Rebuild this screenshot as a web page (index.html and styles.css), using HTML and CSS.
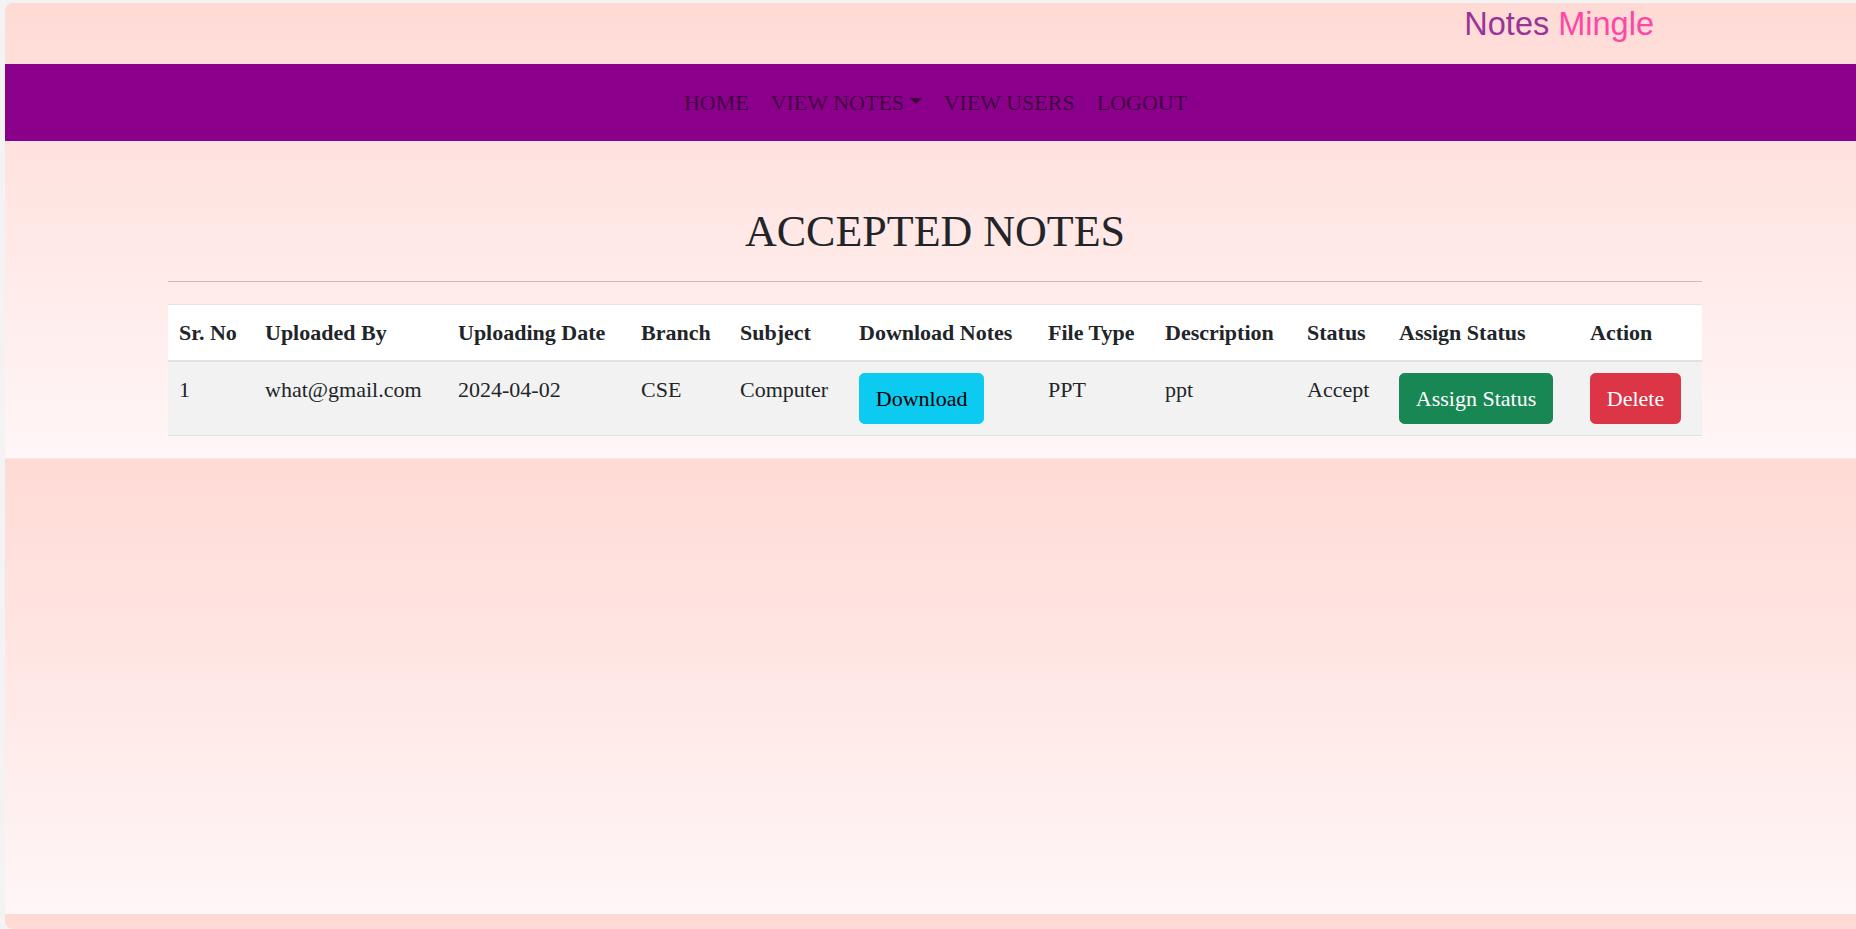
FILE: index.html
```html
<!DOCTYPE html>
<html lang="en">
<head>
<meta charset="utf-8">
<title>Accepted Notes - Notes Mingle</title>
<link rel="stylesheet" href="styles.css">
</head>
<body>
<div class="window">
  <header class="topbar">
    <div class="brand"><span class="brand-notes">Notes</span> <span class="brand-mingle">Mingle</span></div>
  </header>
  <nav class="navbar">
    <ul class="nav-list">
      <li><a class="nav-link" href="#">Home</a></li>
      <li><a class="nav-link dropdown-toggle" href="#">View Notes</a></li>
      <li><a class="nav-link" href="#">View Users</a></li>
      <li><a class="nav-link" href="#">Logout</a></li>
    </ul>
  </nav>
  <main class="content">
    <div class="container">
      <h2 class="page-title">ACCEPTED NOTES</h2>
      <hr class="divider">
      <table class="notes-table">
        <colgroup>
          <col class="c-sr"><col class="c-by"><col class="c-date"><col class="c-branch"><col class="c-subject"><col class="c-download"><col class="c-type"><col class="c-desc"><col class="c-status"><col class="c-assign"><col class="c-action">
        </colgroup>
        <thead>
          <tr>
            <th>Sr. No</th>
            <th>Uploaded By</th>
            <th>Uploading Date</th>
            <th>Branch</th>
            <th>Subject</th>
            <th>Download Notes</th>
            <th>File Type</th>
            <th>Description</th>
            <th>Status</th>
            <th>Assign Status</th>
            <th>Action</th>
          </tr>
        </thead>
        <tbody>
          <tr>
            <td>1</td>
            <td>what@gmail.com</td>
            <td>2024-04-02</td>
            <td>CSE</td>
            <td>Computer</td>
            <td><a class="btn btn-info" href="#">Download</a></td>
            <td>PPT</td>
            <td>ppt</td>
            <td>Accept</td>
            <td><a class="btn btn-success" href="#">Assign Status</a></td>
            <td><a class="btn btn-danger" href="#">Delete</a></td>
          </tr>
        </tbody>
      </table>
    </div>
  </main>
</div>
</body>
</html>
```

FILE: styles.css
```css
html, body {
  margin: 0;
  padding: 0;
}

body {
  background: #f3f3f3;
  font-family: "Liberation Serif", "Times New Roman", serif;
  color: #212529;
  overflow: hidden;
}

.window {
  margin: 3px 0 0 5px;
  height: 926px;
  border-radius: 8px 0 0 8px;
  overflow: hidden;
  background-image: linear-gradient(to bottom, #ffdad5, #fff6f7);
  background-size: 100% 455.5px;
  background-repeat: repeat-y;
}

/* top brand bar */
.topbar {
  height: 61px;
  display: flex;
  justify-content: flex-end;
  align-items: flex-start;
  padding-right: 202px;
  box-sizing: border-box;
}

.brand {
  font-family: "Liberation Sans", Arial, sans-serif;
  font-size: 32.5px;
  line-height: 38px;
  padding-top: 2px;
  white-space: nowrap;
}

.brand-notes { color: #993399; }
.brand-mingle { color: #ff45a6; }

/* navigation */
.navbar {
  background: #8b008b;
  padding: 11px 0 11px 10px;
}

.nav-list {
  list-style: none;
  margin: 0;
  padding: 0;
  display: flex;
  justify-content: center;
}

.nav-link {
  display: block;
  padding: 11px 11px;
  font-size: 22px;
  line-height: 33px;
  text-transform: uppercase;
  text-decoration: none;
  color: rgba(0, 0, 0, 0.55);
}

.dropdown-toggle::after {
  content: "";
  display: inline-block;
  margin-left: 0.255em;
  vertical-align: 0.255em;
  border-top: 0.3em solid;
  border-right: 0.3em solid transparent;
  border-left: 0.3em solid transparent;
  border-bottom: 0;
}

/* main content */
.content {
  padding-left: 9px;
}

.container {
  width: 1534px;
  margin: 0 auto;
}

.page-title {
  margin: 65px 0 0;
  text-align: center;
  font-size: 44px;
  line-height: 1.2;
  font-weight: normal;
  color: #212529;
}

.divider {
  margin: 22px 0;
  border: 0;
  border-top: 1px solid rgba(0, 0, 0, 0.2);
  height: 0;
}

.notes-table {
  width: 1534px;
  table-layout: fixed;
  border-collapse: collapse;
  margin-bottom: 22px;
  font-size: 22px;
  line-height: 33px;
  color: #212529;
  border-top: 1px solid #e4e4e8;
}

.c-sr { width: 86px; }
.c-by { width: 193px; }
.c-date { width: 183px; }
.c-branch { width: 99px; }
.c-subject { width: 119px; }
.c-download { width: 189px; }
.c-type { width: 117px; }
.c-desc { width: 142px; }
.c-status { width: 92px; }
.c-assign { width: 191px; }
.c-action { width: 123px; }

.notes-table th,
.notes-table td {
  padding: 11px;
  text-align: left;
  vertical-align: top;
  white-space: nowrap;
}

.notes-table th {
  background: #ffffff;
  font-weight: bold;
  border-bottom: 2px solid #dee2e6;
}

.notes-table td {
  background: #f2f2f2;
  border-bottom: 1px solid #dee2e6;
}

.btn {
  display: inline-block;
  padding: 8.25px 15.8px;
  font-size: 22px;
  line-height: 33px;
  border: 1px solid transparent;
  border-radius: 5.5px;
  text-decoration: none;
  vertical-align: top;
}

.btn-info {
  background: #0dcaf0;
  border-color: #0dcaf0;
  color: #000;
}

.btn-success {
  background: #198754;
  border-color: #198754;
  color: #fff;
}

.btn-danger {
  background: #dc3545;
  border-color: #dc3545;
  color: #fff;
}
```
